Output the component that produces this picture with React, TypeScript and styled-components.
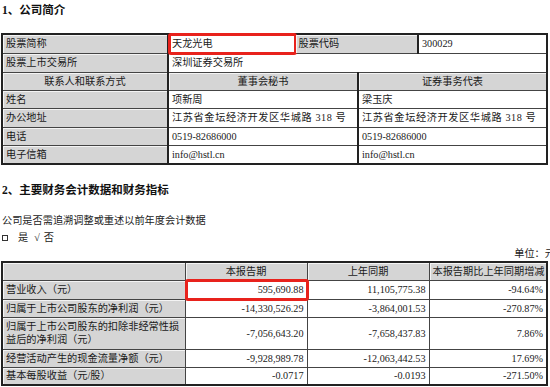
import React from 'react';
import styled, { createGlobalStyle, css } from 'styled-components';

const GlobalStyle = createGlobalStyle`
	html, body {
		margin: 0;
		padding: 0;
		background: #ffffff;
		overflow: hidden;
	}
	body {
		font-family: 'Liberation Serif', 'Noto Sans CJK SC', serif;
		color: #1a1a1a;
	}
`;

const Page = styled('div')({
	width: '550px',
	height: '387px',
	display: 'flex',
	flexDirection: 'column',
});

const SectionTitle = styled('h2')<{ $top: number; $bottom: number }>(({ $top, $bottom }) => ({
	margin: `${$top}px 0 ${$bottom}px 2px`,
	fontSize: '11.5px',
	lineHeight: '14px',
	fontWeight: 700,
	color: '#111',
}));

const Note = styled('p')<{ $top: number }>(({ $top }) => ({
	margin: `${$top}px 0 0 2px`,
	fontSize: '10.2px',
	lineHeight: '14px',
	color: '#222',
	display: 'flex',
	alignItems: 'center',
}));

const Choice = styled('span')<{ $gap: number }>(({ $gap }) => ({
	marginRight: `${$gap}px`,
}));

const Box = styled('span')({
	display: 'inline-block',
	width: '4px',
	height: '4px',
	border: '1px solid #333',
	marginTop: '3px',
});

const Unit = styled('div')({
	marginTop: '2px',
	marginRight: '-5px',
	textAlign: 'right',
	fontSize: '10.2px',
	lineHeight: '14px',
	color: '#222',
});

const Table = styled('table')({
	marginLeft: '1px',
	width: '547px',
	tableLayout: 'fixed',
	borderCollapse: 'collapse',
	border: '2px solid #222',
	fontSize: '10.2px',
});

const Row = styled('tr')<{ $h: number }>(({ $h }) => ({
	height: `${$h}px`,
}));

const Cell = styled('td')<{
	$shade?: boolean;
	$align?: 'left' | 'center' | 'right';
	$thick?: boolean;
	$marked?: boolean;
}>`
	position: relative;
	padding: 0 3px;
	line-height: 13px;
	vertical-align: middle;
	border-top: 1px solid #444;
	border-bottom: 1px solid #444;
	border-left: ${p => (p.$thick ? '2px solid #222' : '1px solid #444')};
	border-right: 1px solid #444;
	text-align: ${p => p.$align ?? 'left'};
	white-space: nowrap;
	overflow: visible;
	${p =>
		p.$shade &&
		css`
			background: #d5d5d5;
			box-shadow: inset 0 1px 0 #f4f4f4, inset 1px 0 0 #f4f4f4;
		`}
	${p =>
		p.$marked &&
		css`
			&::after {
				content: '';
				position: absolute;
				left: -1px;
				top: -2px;
				right: -2px;
				bottom: -2px;
				border: 3px solid #e8221c;
				border-radius: 3px;
				pointer-events: none;
			}
		`}
`;

const Wrap = styled('span')({
	whiteSpace: 'normal',
	display: 'block',
});

const Address = styled('span')({
	letterSpacing: '0.6px',
});

const finRows = [
	{ label: '营业收入（元）', cur: '595,690.88', prev: '11,105,775.38', diff: '-94.64%', h: 19, marked: true },
	{ label: '归属于上市公司股东的净利润（元）', cur: '-14,330,526.29', prev: '-3,864,001.53', diff: '-270.87%', h: 18 },
	{
		label: '归属于上市公司股东的扣除非经常性损益后的净利润（元）',
		cur: '-7,056,643.20',
		prev: '-7,658,437.83',
		diff: '7.86%',
		h: 32,
	},
	{ label: '经营活动产生的现金流量净额（元）', cur: '-9,928,989.78', prev: '-12,063,442.53', diff: '17.69%', h: 18 },
	{ label: '基本每股收益（元/股）', cur: '-0.0717', prev: '-0.0193', diff: '-271.50%', h: 18 },
];

const contacts = [
	{ label: '姓名', a: '项新周', b: '梁玉庆' },
	{ label: '办公地址', a: '江苏省金坛经济开发区华城路 318 号', b: '江苏省金坛经济开发区华城路 318 号' },
	{ label: '电话', a: '0519-82686000', b: '0519-82686000' },
	{ label: '电子信箱', a: 'info@hstl.cn', b: 'info@hstl.cn' },
];

function CompanyTable() {
	return (
		<Table>
			<colgroup>
				<col style={{ width: '166px' }} />
				<col style={{ width: '127px' }} />
				<col style={{ width: '63px' }} />
				<col style={{ width: '60px' }} />
				<col />
			</colgroup>
			<tbody>
				<Row $h={19}>
					<Cell $shade>股票简称</Cell>
					<Cell $thick $marked>天龙光电</Cell>
					<Cell $shade colSpan={2}>股票代码</Cell>
					<Cell $thick>300029</Cell>
				</Row>
				<Row $h={19}>
					<Cell $shade>股票上市交易所</Cell>
					<Cell $thick colSpan={4}>深圳证券交易所</Cell>
				</Row>
				<Row $h={18}>
					<Cell $shade $align='center'>联系人和联系方式</Cell>
					<Cell $shade $thick $align='center' colSpan={2}>董事会秘书</Cell>
					<Cell $shade $thick $align='center' colSpan={2}>证券事务代表</Cell>
				</Row>
				{contacts.map(c => (
					<Row $h={18.5} key={c.label}>
						<Cell $shade>{c.label}</Cell>
						<Cell $thick colSpan={2}>
							{c.label === '办公地址' ? <Address>{c.a}</Address> : c.a}
						</Cell>
						<Cell $thick colSpan={2}>
							{c.label === '办公地址' ? <Address>{c.b}</Address> : c.b}
						</Cell>
					</Row>
				))}
			</tbody>
		</Table>
	);
}

function FinanceTable() {
	return (
		<Table>
			<colgroup>
				<col style={{ width: '183px' }} />
				<col style={{ width: '122px' }} />
				<col style={{ width: '122px' }} />
				<col />
			</colgroup>
			<tbody>
				<Row $h={18}>
					<Cell $shade />
					<Cell $shade $align='center'>本报告期</Cell>
					<Cell $shade $align='center'>上年同期</Cell>
					<Cell $shade $align='center'>本报告期比上年同期增减</Cell>
				</Row>
				{finRows.map(r => (
					<Row $h={r.h} key={r.label}>
						<Cell $shade>{r.h > 25 ? <Wrap>{r.label}</Wrap> : r.label}</Cell>
						<Cell $align='right' $marked={r.marked}>{r.cur}</Cell>
						<Cell $align='right'>{r.prev}</Cell>
						<Cell $align='right'>{r.diff}</Cell>
					</Row>
				))}
			</tbody>
		</Table>
	);
}

export default function App() {
	return (
		<Page>
			<GlobalStyle />
			<SectionTitle $top={3} $bottom={16}>1、公司简介</SectionTitle>
			<CompanyTable />
			<SectionTitle $top={18} $bottom={0}>2、主要财务会计数据和财务指标</SectionTitle>
			<Note $top={17}>公司是否需追溯调整或重述以前年度会计数据</Note>
			<Note $top={3}>
				<Choice $gap={10}>
					<Box />
				</Choice>
				<Choice $gap={6}>是</Choice>
				<Choice $gap={4}>√</Choice>
				<Choice $gap={0}>否</Choice>
			</Note>
			<Unit>单位：元</Unit>
			<FinanceTable />
		</Page>
	);
}
